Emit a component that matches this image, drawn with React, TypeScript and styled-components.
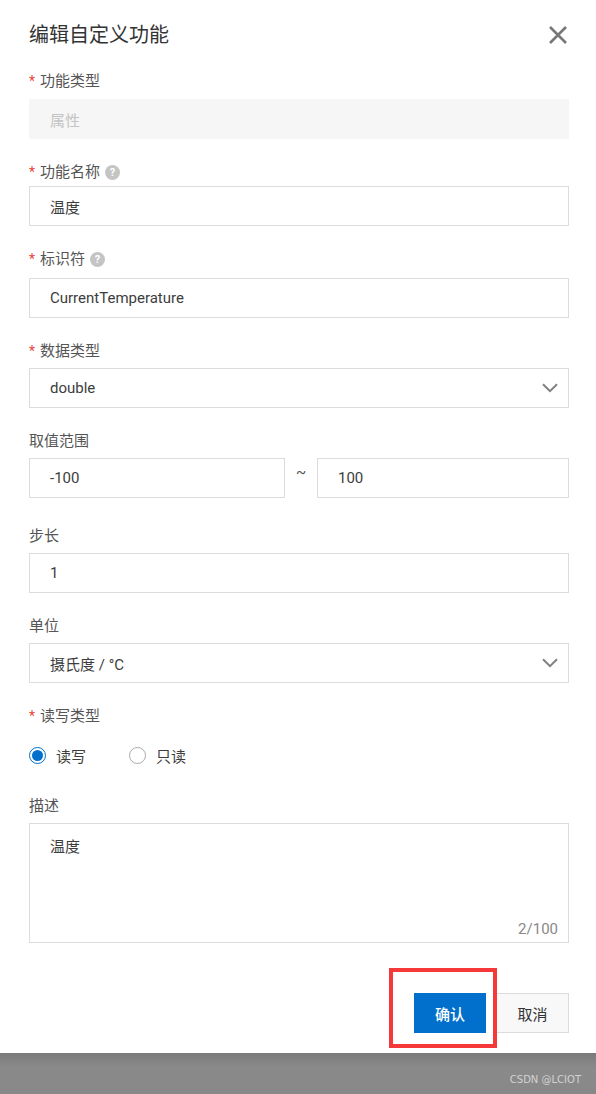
import React from "react";
import styled, { createGlobalStyle } from "styled-components";

const Global = createGlobalStyle`
  html, body { margin: 0; padding: 0; background: #fff; }
  body { font-family: Roboto, "Noto Sans CJK SC", sans-serif; color: #333; font-size: 15px; }
`;

const Page = styled.div`
  width: 596px;
  height: 1094px;
  position: relative;
  overflow: hidden;
  display: flex;
  flex-direction: column;
`;

const Dialog = styled.div`
  height: 1053px;
  box-sizing: border-box;
  padding: 0 27px 0 29px;
  background: #fff;
  display: flex;
  flex-direction: column;
`;

const Header = styled.div`
  height: 69px;
  display: flex;
  align-items: center;
  justify-content: space-between;
  color: #333;
  font-size: 20px;
  line-height: 28px;
`;

const CloseButton = styled.span`
  display: flex;
  margin-right: 1px;
  color: #777;
`;

const Field = styled.div<{ $top: number }>`
  margin-top: ${(p) => p.$top}px;
  display: flex;
  flex-direction: column;
`;

const Label = styled.div<{ $height: number }>`
  height: ${(p) => p.$height}px;
  line-height: 24px;
  font-size: 15px;
  color: #555;
  display: flex;
  align-items: flex-start;
`;

const Star = styled.span`
  color: #e8463c;
  width: 11px;
  flex: none;
  font-size: 14px;
`;

const Help = styled.span`
  width: 15px;
  height: 15px;
  margin: 5px 0 0 5px;
  border-radius: 50%;
  background: #c4c4c4;
  color: #fff;
  font-size: 11px;
  font-weight: 700;
  line-height: 15px;
  text-align: center;
`;

const Box = styled.div<{ $disabled?: boolean; $width?: number }>`
  width: ${(p) => (p.$width ? `${p.$width}px` : "auto")};
  height: 40px;
  box-sizing: border-box;
  padding: 0 20px;
  display: flex;
  align-items: center;
  justify-content: space-between;
  background: ${(p) => (p.$disabled ? "#f6f6f6" : "#fff")};
  border: 1px solid ${(p) => (p.$disabled ? "#f6f6f6" : "#dcdcdc")};
  color: ${(p) => (p.$disabled ? "#c4c4c4" : "#3d3d3d")};
  font-size: 15px;
`;

const SelectBox = styled(Box)`
  padding-right: 10px;
`;

const RangeRow = styled.div`
  display: flex;
  align-items: flex-start;
`;

const Tilde = styled.span`
  width: 32px;
  text-align: center;
  font-size: 15px;
  line-height: 28px;
  color: #555;
`;

const RadioRow = styled.div`
  height: 24px;
  margin-top: 10px;
  margin-bottom: 1px;
  display: flex;
  align-items: center;
`;

const RadioItem = styled.div`
  width: 100px;
  display: flex;
  align-items: center;
  gap: 10px;
  color: #3d3d3d;
`;

const RadioMark = styled.span<{ $on?: boolean }>`
  width: 17px;
  height: 17px;
  box-sizing: border-box;
  border-radius: 50%;
  border: 1px solid ${(p) => (p.$on ? "#0070cc" : "#aaa")};
  display: flex;
  align-items: center;
  justify-content: center;
  &::after {
    content: "";
    width: 11px;
    height: 11px;
    border-radius: 50%;
    background: ${(p) => (p.$on ? "#0070cc" : "transparent")};
  }
`;

const TextArea = styled.div`
  height: 120px;
  box-sizing: border-box;
  border: 1px solid #dcdcdc;
  padding: 11px 20px;
  line-height: 24px;
  position: relative;
  color: #3d3d3d;
`;

const Counter = styled.span`
  position: absolute;
  right: 10px;
  bottom: 1px;
  color: #888;
  font-size: 15px;
`;

const Footer = styled.div`
  margin-top: 50px;
  display: flex;
  justify-content: flex-end;
  gap: 10px;
`;

const Button = styled.div<{ $primary?: boolean }>`
  width: ${(p) => (p.$primary ? "72px" : "73px")};
  height: 40px;
  box-sizing: border-box;
  display: flex;
  align-items: center;
  justify-content: center;
  font-size: 15px;
  background: ${(p) => (p.$primary ? "#0070cc" : "#f8f8f8")};
  color: ${(p) => (p.$primary ? "#fff" : "#333")};
  border: 1px solid ${(p) => (p.$primary ? "#0070cc" : "#dcdcdc")};
  font-weight: ${(p) => (p.$primary ? 500 : 400)};
`;

const Annotation = styled.div`
  position: absolute;
  left: 389px;
  top: 968px;
  width: 108px;
  height: 80px;
  box-sizing: border-box;
  border: 4px solid #f53838;
`;

const Backdrop = styled.div`
  flex: 1;
  background: linear-gradient(#7a7a7a, #8a8a8a 14px, #888);
  display: flex;
  align-items: center;
  justify-content: flex-end;
  padding: 11px 15px 0 0;
`;

const Watermark = styled.span`
  font-family: "DejaVu Sans", sans-serif;
  font-size: 10px;
  color: #d2d2d2;
`;

const Chevron = () => (
  <svg width="16" height="10" viewBox="0 0 16 10" fill="none" stroke="#808080" strokeWidth="2">
    <path d="M1 1.2 L8 8.2 L15 1.2" />
  </svg>
);

const X = () => (
  <svg width="20" height="20" viewBox="0 0 20 20" fill="none" stroke="currentColor" strokeWidth="2.6">
    <path d="M2 2 L18 18 M18 2 L2 18" />
  </svg>
);

export default function App() {
  return (
    <Page>
      <Global />
      <Dialog>
        <Header>
          <span>编辑自定义功能</span>
          <CloseButton><X /></CloseButton>
        </Header>

        <Field $top={0}>
          <Label $height={30}><Star>*</Star>功能类型</Label>
          <Box $disabled>属性</Box>
        </Field>

        <Field $top={21}>
          <Label $height={26}><Star>*</Star>功能名称<Help>?</Help></Label>
          <Box>温度</Box>
        </Field>

        <Field $top={21}>
          <Label $height={31}><Star>*</Star>标识符<Help>?</Help></Label>
          <Box>CurrentTemperature</Box>
        </Field>

        <Field $top={21}>
          <Label $height={29}><Star>*</Star>数据类型</Label>
          <SelectBox>double<Chevron /></SelectBox>
        </Field>

        <Field $top={21}>
          <Label $height={29}>取值范围</Label>
          <RangeRow>
            <Box $width={256}>-100</Box>
            <Tilde>~</Tilde>
            <Box $width={252}>100</Box>
          </RangeRow>
        </Field>

        <Field $top={26}>
          <Label $height={29}>步长</Label>
          <Box>1</Box>
        </Field>

        <Field $top={21}>
          <Label $height={29}>单位</Label>
          <SelectBox>摄氏度 / °C<Chevron /></SelectBox>
        </Field>

        <Field $top={21}>
          <Label $height={29}><Star>*</Star>读写类型</Label>
          <RadioRow>
            <RadioItem><RadioMark $on />读写</RadioItem>
            <RadioItem><RadioMark />只读</RadioItem>
          </RadioRow>
        </Field>

        <Field $top={26}>
          <Label $height={29}>描述</Label>
          <TextArea>温度<Counter>2/100</Counter></TextArea>
        </Field>

        <Footer>
          <Button $primary>确认</Button>
          <Button>取消</Button>
        </Footer>
      </Dialog>
      <Backdrop><Watermark>CSDN @LCIOT</Watermark></Backdrop>
      <Annotation />
    </Page>
  );
}
